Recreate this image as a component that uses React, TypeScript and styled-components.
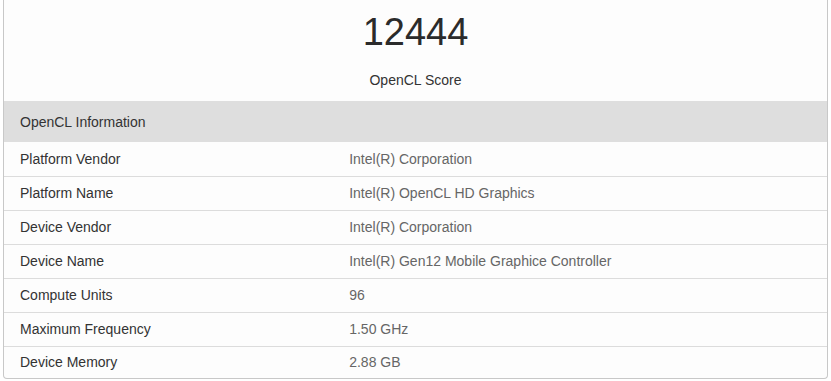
import React from 'react';
import styled, { createGlobalStyle } from 'styled-components';

const GlobalStyle = createGlobalStyle`
  html, body {
    margin: 0;
    padding: 0;
    background: #fff;
  }
  body {
    font-family: "Liberation Sans", Arial, sans-serif;
    color: #333;
  }
`;

const Card = styled.div`
  margin: 0 3px;
  width: 825px;
  box-sizing: border-box;
  border: 1px solid #c8c8c8;
  border-top: none;
  border-radius: 0 0 4px 4px;
  background: #fdfdfd;
  overflow: hidden;
`;

const ScoreBlock = styled.div`
  display: flex;
  flex-direction: column;
  align-items: center;
  padding: 11px 0 11px;
`;

const Score = styled.div`
  font-size: 38px;
  line-height: 42px;
  color: #2b2b2b;
`;

const ScoreLabel = styled.div`
  font-size: 14px;
  line-height: 20px;
  margin-top: 17px;
  color: #333;
`;

const SectionHeader = styled.div`
  background: #dedede;
  height: 41px;
  display: flex;
  align-items: center;
  padding: 0 16px;
  font-size: 14px;
  color: #333;
`;

const Table = styled.table`
  width: 100%;
  border-collapse: collapse;
  font-size: 14px;
`;

const Row = styled.tr`
  & + & td {
    border-top: 1px solid #dcdcdc;
  }
  &:last-child td {
    height: 32px;
  }
`;

const Cell = styled.td<{ $value?: boolean }>`
  height: 34px;
  padding: 0 16px;
  vertical-align: middle;
  width: ${(p) => (p.$value ? 'auto' : '40%')};
  color: ${(p) => (p.$value ? '#666' : '#333')};
  box-sizing: border-box;
`;

const rows: [string, string][] = [
  ['Platform Vendor', 'Intel(R) Corporation'],
  ['Platform Name', 'Intel(R) OpenCL HD Graphics'],
  ['Device Vendor', 'Intel(R) Corporation'],
  ['Device Name', 'Intel(R) Gen12 Mobile Graphice Controller'],
  ['Compute Units', '96'],
  ['Maximum Frequency', '1.50 GHz'],
  ['Device Memory', '2.88 GB'],
];

export default function App() {
  return (
    <>
      <GlobalStyle />
      <Card>
        <ScoreBlock>
          <Score>12444</Score>
          <ScoreLabel>OpenCL Score</ScoreLabel>
        </ScoreBlock>
        <SectionHeader>OpenCL Information</SectionHeader>
        <Table>
          <tbody>
            {rows.map(([label, value]) => (
              <Row key={label}>
                <Cell>{label}</Cell>
                <Cell $value>{value}</Cell>
              </Row>
            ))}
          </tbody>
        </Table>
      </Card>
    </>
  );
}
